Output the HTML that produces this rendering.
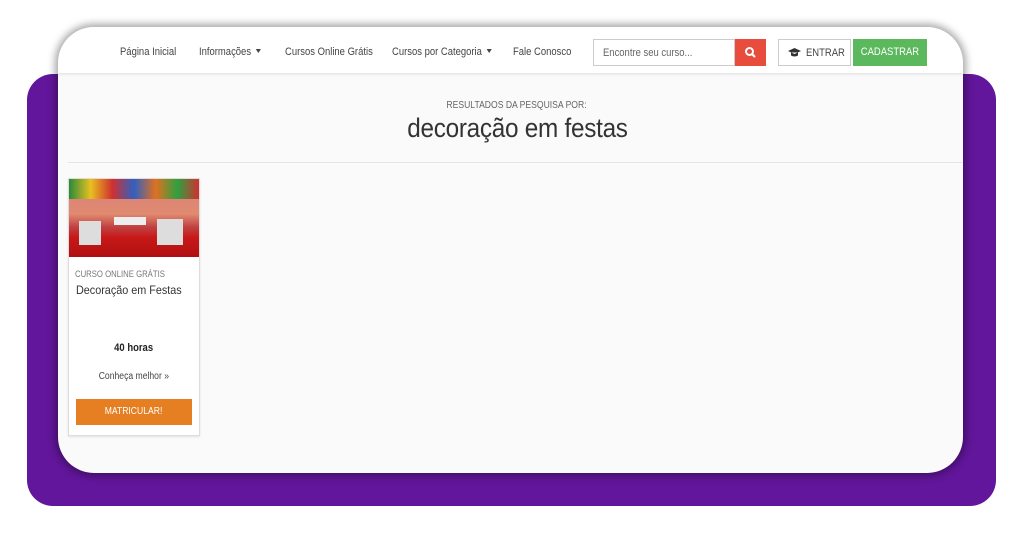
<!DOCTYPE html>
<html><head><meta charset="utf-8"><style>
*{margin:0;padding:0;box-sizing:border-box}
body{width:1024px;height:536px;background:#fff;position:relative;overflow:hidden;font-family:"Liberation Sans",sans-serif;color:#333}
.purple{position:absolute;left:27px;top:74px;width:969px;height:432px;background:#62169b;border-radius:26px}
.card{position:absolute;left:58px;top:27px;width:905px;height:446px;background:#fafafa;border-radius:36px;overflow:hidden;box-shadow:0 0 8px 3px rgba(0,0,0,.35)}
.nav{position:absolute;left:0;top:0;width:905px;height:46px;background:#fff;box-shadow:0 1px 3px rgba(0,0,0,.12)}
.n{display:inline-block;transform:scaleX(.86);transform-origin:left center;white-space:nowrap}
.nc{display:inline-block;transform:scaleX(.86);transform-origin:center center;white-space:nowrap}
.nav a{position:absolute;top:19px;font-size:11px;color:#444}
.caret{display:inline-block;width:0;height:0;border-left:3px solid transparent;border-right:3px solid transparent;border-top:4px solid #444;margin-left:5px;vertical-align:2px}
.search{position:absolute;left:535px;top:12px;width:142px;height:27px;border:1px solid #ccc;background:#fff;font-size:11px;color:#666;padding:7px 9px}
.sbtn{position:absolute;left:677px;top:12px;width:31px;height:27px;background:#e74c3c}
.entrar{position:absolute;left:720px;top:12px;width:73px;height:27px;border:1px solid #ccc;background:#fff;font-size:11px;color:#444;padding:7px 0 0 27px}
.cad{position:absolute;left:795px;top:12px;width:74px;height:27px;background:#5cb85c;color:#fff;font-size:11px;text-align:center;line-height:27px}
.res{position:absolute;left:0;width:918px;text-align:center;top:73px;font-size:10px;color:#666}
.h1{position:absolute;left:0;width:918px;text-align:center;top:86px;font-size:27px;color:#333;letter-spacing:-.3px}
.hr{position:absolute;left:10px;top:135px;width:895px;height:1px;background:#e5e5e5}
.c{position:absolute;left:10px;top:151px;width:132px;height:258px;background:#fff;border:1px solid #ddd;box-shadow:0 1px 2px rgba(0,0,0,.1)}
.img{position:absolute;left:0;top:0;width:130px;height:78px;overflow:hidden;background:linear-gradient(180deg,#d88080 0,#e08a70 45%,#c04040 62%,#c81818 75%,#b01010 100%)}
</style></head><body>
<div class="purple"></div>
<div class="card">
 <div class="nav">
  <a style="left:62px"><span class="n">Página Inicial</span></a>
  <a style="left:141px"><span class="n">Informações<span class="caret"></span></span></a>
  <a style="left:227px"><span class="n">Cursos Online Grátis</span></a>
  <a style="left:334px"><span class="n">Cursos por Categoria<span class="caret"></span></span></a>
  <a style="left:455px"><span class="n">Fale Conosco</span></a>
  <div class="search"><span class="n">Encontre seu curso...</span></div>
  <div class="sbtn"><svg width="31" height="27"><circle cx="14.5" cy="12.5" r="3.5" fill="none" stroke="#fff" stroke-width="2"/><line x1="17" y1="15" x2="20" y2="18" stroke="#fff" stroke-width="2.2"/></svg></div>
  <div class="entrar"><svg style="position:absolute;left:9px;top:8px" width="13" height="10"><path d="M0 3 L6.5 0 L13 3 L6.5 6Z M3 4.5 V7.5 Q6.5 9.5 10 7.5 V4.5" fill="#333"/></svg><span class="n">ENTRAR</span></div>
  <div class="cad"><span class="nc">CADASTRAR</span></div>
 </div>
 <div class="res"><span class="nc">RESULTADOS DA PESQUISA POR:</span></div>
 <div class="h1"><span class="nc" style="transform:scaleX(.9)">decoração em festas</span></div>
 <div class="hr"></div>
 <div class="c">
  <div class="img">
   <div style="position:absolute;left:0;top:0;width:130px;height:20px;background:linear-gradient(90deg,#2a8a3a,#e8c020,#d03030,#3060c0,#e07020,#30a040,#d03030)"></div>
   <div style="position:absolute;left:10px;top:42px;width:22px;height:24px;background:#ddd"></div>
   <div style="position:absolute;left:88px;top:40px;width:26px;height:26px;background:#ddd"></div>
   <div style="position:absolute;left:45px;top:38px;width:32px;height:8px;background:#eee"></div>
  </div>
  <div style="position:absolute;left:6px;top:90px;font-size:9px;color:#777"><span class="n">CURSO ONLINE GRÁTIS</span></div>
  <div style="position:absolute;left:7px;top:104px;font-size:12px;color:#333"><span class="n" style="transform:scaleX(.9)">Decoração em Festas</span></div>
  <div style="position:absolute;left:0;width:130px;text-align:center;top:163px;font-size:11px;color:#222;font-weight:bold"><span class="nc">40 horas</span></div>
  <div style="position:absolute;left:0;width:130px;text-align:center;top:192px;font-size:10px;color:#444"><span class="nc">Conheça melhor »</span></div>
  <div style="position:absolute;left:7px;top:220px;width:116px;height:26px;background:#e67e22;color:#fff;font-size:10px;text-align:center;line-height:26px"><span class="nc">MATRICULAR!</span></div>
 </div>
</div>
</body></html>
